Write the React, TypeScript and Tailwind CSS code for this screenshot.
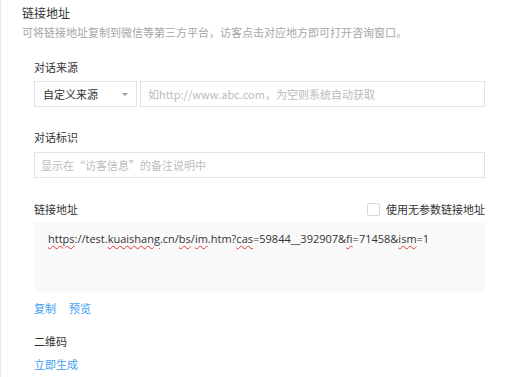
import React from "react";

const font = { fontFamily: '"Noto Sans CJK SC", "Noto Sans", sans-serif' };

function W({ children }: { children: React.ReactNode }) {
  return <span className="underline decoration-wavy decoration-[#e53935] decoration-1 underline-offset-2">{children}</span>;
}

export default function App() {
  return (
    <div className="h-[377px] w-[513px] overflow-hidden bg-white border-l border-[#e8e8e8] pl-[21px] pt-[6px] text-[#333]" style={font}>
      <div className="text-[12px] leading-[14px]">链接地址</div>
      <div className="mt-[4px] text-[11px] leading-[16px] text-[#a6a6a6]">可将链接地址复制到微信等第三方平台，访客点击对应地方即可打开咨询窗口。</div>
      <div className="pl-[12px] w-[463px]">
        <div className="mt-[19px] text-[11px] leading-[16px]">对话来源</div>
        <div className="mt-[6px] flex gap-[3px] h-[26px]">
          <div className="w-[103px] border border-[#e3e3e3] flex items-center justify-between pl-[8px] pr-[8px] text-[11px]">
            <span>自定义来源</span>
            <span className="w-0 h-0 border-l-[3px] border-r-[3px] border-t-[3px] border-l-transparent border-r-transparent border-t-[#999]"></span>
          </div>
          <div className="flex-1 border border-[#e3e3e3] flex items-center pl-[7px] text-[11px] text-[#bbb]">如http://www.abc.com，为空则系统自动获取</div>
        </div>
        <div className="mt-[22px] text-[11px] leading-[16px]">对话标识</div>
        <div className="mt-[7px] h-[26px] border border-[#e3e3e3] flex items-center pl-[6px] text-[11px] text-[#bbb]">显示在“访客信息”的备注说明中</div>
        <div className="mt-[23px] flex items-center justify-between h-[16px]">
          <span className="text-[11px] leading-[16px]">链接地址</span>
          <div className="flex items-center gap-[6px]">
            <span className="w-[13px] h-[13px] border border-[#d9d9d9] rounded-[2px] bg-white"></span>
            <span className="text-[11px] leading-[16px]">使用无参数链接地址</span>
          </div>
        </div>
        <div className="mt-[5px] h-[70px] bg-[#f9f9f9] pl-[14px] pt-[9px] text-[11px] leading-[16px] text-[#333]" style={{ fontFamily: '"Open Sans", "Noto Sans", sans-serif' }}>
          <W>https</W>://test.<W>kuaishang</W>.cn/<W>bs</W>/<W>im</W>.htm?<W>cas</W>=59844__392907&amp;<W>fi</W>=71458&amp;<W>ism</W>=1
        </div>
        <div className="mt-[8px] flex gap-[13px] text-[11px] leading-[16px] text-[#3d9cf2]">
          <span>复制</span>
          <span>预览</span>
        </div>
        <div className="mt-[17px] text-[11px] leading-[16px]">二维码</div>
        <div className="mt-[7px] text-[11px] leading-[16px] text-[#3d9cf2]">立即生成</div>
      </div>
    </div>
  );
}
